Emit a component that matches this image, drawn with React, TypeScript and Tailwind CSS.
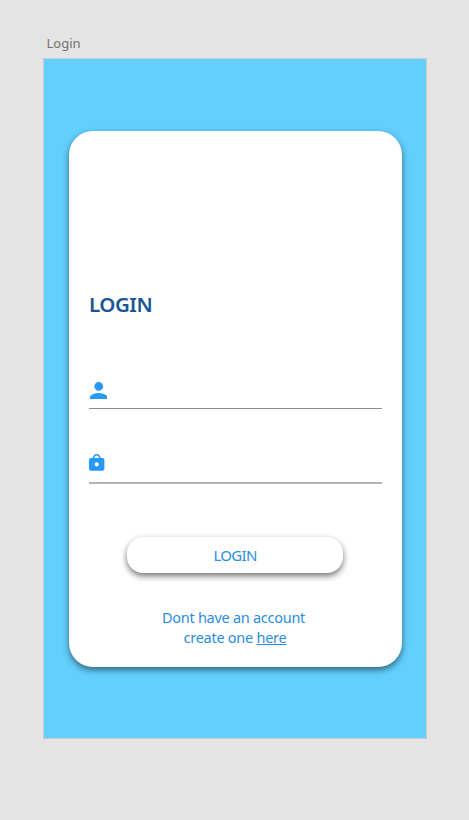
function PersonIcon() {
  return (
    <svg className="ml-[0.5px] mt-[0.5px] h-[17.5px] w-[17.5px] fill-[#2699fb]" viewBox="4 4 16 16">
      <path d="M12 12c2.21 0 4-1.79 4-4s-1.79-4-4-4-4 1.79-4 4 1.79 4 4 4zm0 2c-2.67 0-8 1.34-8 4v2h16v-2c0-2.66-5.33-4-8-4z" />
    </svg>
  );
}

function LockIcon() {
  return (
    <svg className="h-[17px] w-4 fill-[#2699fb]" viewBox="0 0 16 17">
      <path
        fillRule="evenodd"
        d="M2 4h1.7C4.1 1.6 5.7 0 7.7 0s3.6 1.6 4 4h1.7a2 2 0 0 1 2 2v8.8a2 2 0 0 1-2 2H2a2 2 0 0 1-2-2V6a2 2 0 0 1 2-2Zm3.3 0h4.8C9.8 2.5 9 1.6 7.7 1.6S5.6 2.5 5.3 4Zm2.4 4.2a2.1 2.1 0 1 0 0 4.2 2.1 2.1 0 0 0 0-4.2Z"
      />
    </svg>
  );
}

export default function App() {
  return (
    <div className="h-[820px] w-full overflow-hidden bg-[#e4e4e4] pl-[43px] pt-[34px] font-['Noto_Sans','Open_Sans',sans-serif]">
      <div className="h-6 pl-[3.5px] text-[13px] leading-[19px] text-[#707070]">Login</div>
      <div className="h-[681px] w-[384px] border border-[#cbcbcb] bg-[#62cffd] px-[25px] pt-[72px]">
        <main className="flex h-[536px] w-[333px] flex-col rounded-[24px] bg-white pl-[20px] pr-[19px] pt-[159px] shadow-[0_3px_6px_rgba(0,0,0,0.5)]">
          <h1 className="h-[91px] text-[20.5px] font-semibold leading-[29px] tracking-[-0.5px] text-[#1a5596]">LOGIN</h1>
          <div className="h-[28px] w-[293px] border-b border-[#8c8c8c]">
            <PersonIcon />
          </div>
          <div className="mt-[45px] h-[30px] w-[293px] border-b-2 border-[#b4b4b4]">
            <LockIcon />
          </div>
          <button className="ml-[38px] mt-[53px] h-9 w-[216px] shrink-0 rounded-[16px] bg-white text-[15px] tracking-[-0.7px] text-[#2b8ddd] shadow-[0_3px_6px_rgba(0,0,0,0.55)]">
            LOGIN
          </button>
          <p className="mr-[5px] mt-[34px] text-center text-[14.5px] leading-5 tracking-[-0.27px] text-[#2b8ddd]">
            Dont have an account
            <br />
            <span className="ml-[3px]">create one </span>
            <a className="underline">here</a>
          </p>
        </main>
      </div>
    </div>
  );
}
